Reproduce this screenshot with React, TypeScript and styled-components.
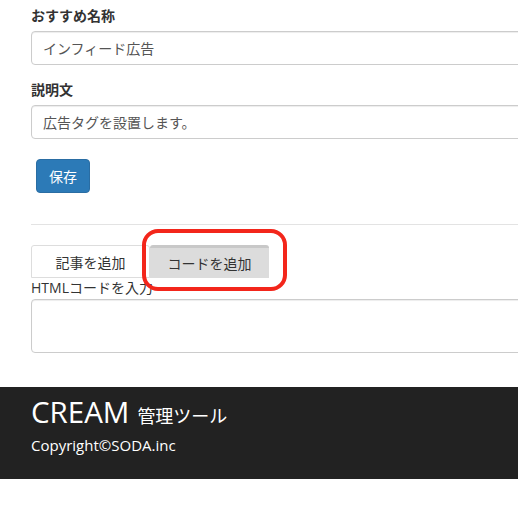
import React from "react";
import styled, { createGlobalStyle } from "styled-components";

const GlobalStyle = createGlobalStyle`
  body {
    margin: 0;
    background: #fff;
    color: #333;
    font-family: "Open Sans", "Noto Sans CJK JP", sans-serif;
    font-size: 14px;
    overflow-x: hidden;
  }
`;

const Page = styled.div`
  width: 640px;
`;

const Form = styled.div`
  padding: 6px 0 0 31px;
`;

const FormGroup = styled.div`
  margin-bottom: 15px;
`;

const Label = styled.label<{ $bold?: boolean }>`
  display: block;
  font-weight: ${(p) => (p.$bold ? 700 : 400)};
  line-height: 20px;
  margin-bottom: ${(p) => (p.$bold ? "5px" : "1px")};
`;

const Input = styled.input`
  box-sizing: border-box;
  display: block;
  width: 100%;
  height: 34px;
  padding: 6px 11px;
  font: inherit;
  color: #555;
  border: 1px solid #ccc;
  border-radius: 4px;
  box-shadow: inset 0 1px 1px rgba(0, 0, 0, 0.075);
  outline: none;
`;

const TextArea = styled.textarea`
  box-sizing: border-box;
  display: block;
  width: 100%;
  height: 54px;
  padding: 6px 12px;
  font: inherit;
  border: 1px solid #ccc;
  border-radius: 4px;
  box-shadow: inset 0 1px 1px rgba(0, 0, 0, 0.075);
  resize: none;
  outline: none;
`;

const SaveButton = styled.button`
  display: block;
  margin: 20px 0 0 5px;
  height: 34px;
  padding: 0 12px;
  font: inherit;
  color: #fff;
  background: #2c7ab7;
  border: 1px solid #2a6da3;
  border-radius: 4px;
`;

const Divider = styled.hr`
  margin: 31px 0 20px;
  border: 0;
  border-top: 1px solid #e3e3e3;
`;

const Tabs = styled.div`
  position: relative;
  display: flex;
`;

const Tab = styled.div<{ $active?: boolean }>`
  box-sizing: border-box;
  width: 119px;
  height: 33px;
  display: flex;
  align-items: center;
  justify-content: center;
  background: ${(p) => (p.$active ? "#dcdcdc" : "#fff")};
  border: ${(p) => (p.$active ? "0" : "1px solid #ddd")};
  border-top: ${(p) => (p.$active ? "3px solid #c8c8c8" : "1px solid #ddd")};
  border-radius: 3px 3px 0 0;
`;

const Highlight = styled.div`
  position: absolute;
  left: 111px;
  top: -16px;
  width: 145px;
  height: 62px;
  box-sizing: border-box;
  border: 4px solid #f3261b;
  border-radius: 16px;
  pointer-events: none;
`;

const Footer = styled.footer`
  margin-top: 34px;
  height: 92px;
  box-sizing: border-box;
  padding: 6px 0 0 31px;
  background: #222;
  color: #fff;
`;

const Brand = styled.div`
  font-size: 29.5px;
  line-height: 38px;
`;

const Sub = styled.span`
  font-size: 18px;
  margin-left: 8px;
`;

const Copy = styled.div`
  margin-top: 0;
  font-size: 15px;
`;

export default function App() {
  return (
    <>
      <GlobalStyle />
      <Page>
        <Form>
          <FormGroup>
            <Label $bold>おすすめ名称</Label>
            <Input defaultValue="インフィード広告" />
          </FormGroup>
          <FormGroup>
            <Label $bold>説明文</Label>
            <Input defaultValue="広告タグを設置します。" />
          </FormGroup>
          <SaveButton>保存</SaveButton>
          <Divider />
          <Tabs>
            <Tab>記事を追加</Tab>
            <Tab $active>コードを追加</Tab>
            <Highlight />
          </Tabs>
          <Label>HTMLコードを入力</Label>
          <TextArea />
        </Form>
        <Footer>
          <Brand>
            CREAM<Sub>管理ツール</Sub>
          </Brand>
          <Copy>Copyright©SODA.inc</Copy>
        </Footer>
      </Page>
    </>
  );
}
